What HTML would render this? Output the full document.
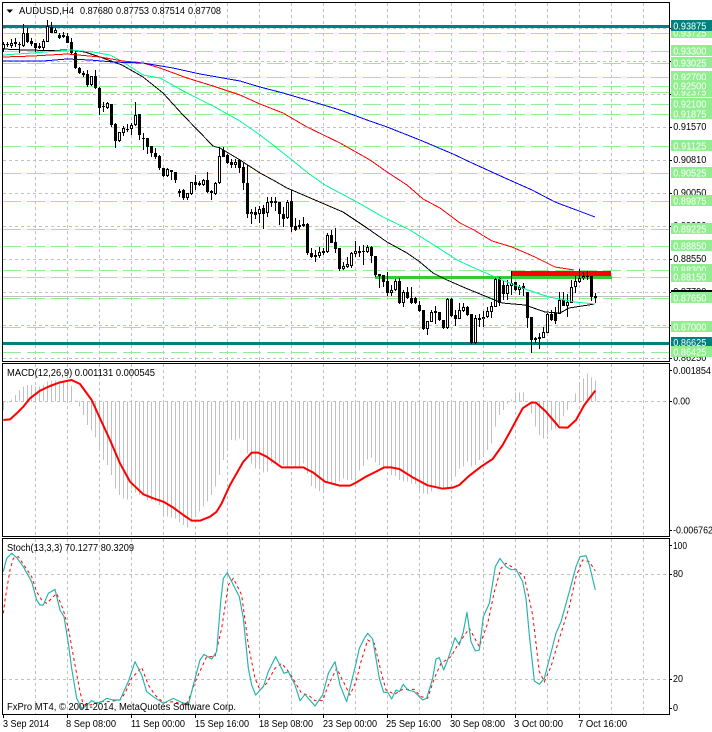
<!DOCTYPE html>
<html><head><meta charset="utf-8"><title>AUDUSD,H4</title>
<style>
html,body{margin:0;padding:0;background:#fff;width:712px;height:732px;overflow:hidden}
svg{display:block;font-family:"Liberation Sans",sans-serif;font-size:10px}
.c{shape-rendering:crispEdges;fill:none}
.w{fill:#fff}.k{fill:#000}
</style></head><body>
<svg width="712" height="732" viewBox="0 0 712 732">
<rect width="712" height="732" fill="#fff"/>
<!-- grid -->
<path class="c" stroke="#c0c0c0" stroke-dasharray="3 3" d="M35.5 3V361M67.5 3V361M99.5 3V361M131.5 3V361M163.5 3V361M195.5 3V361M227.5 3V361M259.5 3V361M291.5 3V361M323.5 3V361M355.5 3V361M387.5 3V361M419.5 3V361M451.5 3V361M483.5 3V361M515.5 3V361M547.5 3V361M579.5 3V361M611.5 3V361M643.5 3V361
M3 28.5H669M3 61.5H669M3 94.5H669M3 127.5H669M3 160.5H669M3 193.5H669M3 226.5H669M3 259.5H669M3 292.5H669M3 325.5H669M3 358.5H669
M35.5 364V536M67.5 364V536M99.5 364V536M131.5 364V536M163.5 364V536M195.5 364V536M227.5 364V536M259.5 364V536M291.5 364V536M323.5 364V536M355.5 364V536M387.5 364V536M419.5 364V536M451.5 364V536M483.5 364V536M515.5 364V536M547.5 364V536M579.5 364V536M611.5 364V536M643.5 364V536
M3 401.5H669
M35.5 539V714M67.5 539V714M99.5 539V714M131.5 539V714M163.5 539V714M195.5 539V714M227.5 539V714M259.5 539V714M291.5 539V714M323.5 539V714M355.5 539V714M387.5 539V714M419.5 539V714M451.5 539V714M483.5 539V714M515.5 539V714M547.5 539V714M579.5 539V714M611.5 539V714M643.5 539V714
M3 574.5H669M3 679.5H669"/>
<!-- green levels -->
<path class="c" stroke="#90ee90" stroke-dasharray="18 6" d="M3 33.5H669M3 51.5H669M3 63.5H669M3 77.5H669M3 86.5H669M3 92.5H669M3 104.5H669M3 114.5H669M3 146.5H669M3 173.5H669M3 201.5H669M3 229.5H669M3 246.5H669M3 270.5H669M3 277.5H669M3 298.5H669M3 327.5H669M3 352.5H669"/>
<path class="c" stroke="#c0c0c0" d="M3 296.5H669"/>
<rect class="c" x="3" y="25" width="666" height="3" style="fill:#008080"/>
<rect class="c" x="3" y="342" width="666" height="3" style="fill:#008080"/>
<rect class="c" x="375" y="276" width="237" height="3" style="fill:#32cd32"/>
<rect class="c" x="511" y="271" width="100" height="5" style="fill:#f00"/>
<!-- candle wicks -->
<path class="c" stroke="#000" d="M3.5 42V52M7.5 42V47M11.5 39V48M15.5 38V47M19.5 42V53M23.5 24V47M27.5 28V43M31.5 38V46M35.5 43V52M39.5 43V49M43.5 39V50M47.5 20V42M51.5 22V33M55.5 28V33M59.5 33V39M63.5 32V38M67.5 33V43M71.5 38V55M75.5 50V69M79.5 67V74M83.5 71V77M87.5 70V87M91.5 76V86M95.5 70V89M99.5 87V115M103.5 102V112M107.5 102V109M111.5 104V127M115.5 123V148M119.5 132V142M123.5 126V136M127.5 124V132M131.5 123V135M135.5 102V126M139.5 114V140M143.5 133V150M147.5 138V154M151.5 146V157M155.5 148V159M159.5 155V170M163.5 168V177M167.5 168V177M171.5 170V180M175.5 172V183M179.5 189V197M183.5 189V200M187.5 193V200M191.5 182V195M195.5 175V190M199.5 181V186M203.5 179V186M207.5 172V193M211.5 190V200M215.5 182V195M219.5 147V184M223.5 147V157M227.5 154V164M231.5 159V168M235.5 159V168M239.5 159V173
M243.5 163V190M247.5 165V218M251.5 209V224M255.5 207V219M259.5 206V223M263.5 205V229M267.5 197V217M271.5 197V207M275.5 197V211M279.5 202V225M283.5 207V227M287.5 200V219M291.5 190V232M295.5 218V231M299.5 220V229M303.5 217V227M307.5 223V255M311.5 248V258M315.5 250V262M319.5 247V258M323.5 248V255M327.5 233V253M331.5 230V243M335.5 228V253M339.5 248V271M343.5 262V270M347.5 257V268M351.5 252V268M355.5 241V257M359.5 246V257M363.5 245V265M367.5 245V253M371.5 246V263M375.5 256V277M379.5 274V288M383.5 275V287M387.5 272V296M391.5 285V296M395.5 279V291M399.5 278V304M403.5 290V307M407.5 287V299M411.5 287V304M415.5 297V304M419.5 301V312M423.5 310V330M427.5 321V335M431.5 310V322M435.5 306V324M439.5 312V321M443.5 320V329M447.5 298V329M451.5 298V317M455.5 310V326M459.5 303V319M463.5 303V312M467.5 306V316M471.5 314V344M475.5 315V344
M479.5 314V327M483.5 311V327M487.5 307V318M491.5 302V318M495.5 277V307M499.5 277V306M503.5 280V300M507.5 280V300M511.5 271V295M515.5 282V291M519.5 285V295M523.5 283V296M527.5 292V328M531.5 317V353M535.5 337V343M539.5 333V349M543.5 327V338M547.5 313V333M551.5 310V321M555.5 307V324M559.5 292V314M563.5 292V306M567.5 294V317M571.5 280V303M575.5 276V293M579.5 269V283M583.5 272V280M587.5 271V280M591.5 276V301M595.5 293V303"/>
<!-- candle bodies -->
<path class="c" stroke="#000" stroke-width="3" d="M3.5 44V49M7.5 44V45M11.5 43V46M15.5 42V44M19.5 44V45M23.5 33V46M27.5 33V42M31.5 41V44M35.5 43V48M39.5 46V48M43.5 41V48M47.5 26V42M51.5 27V33M55.5 30V33M59.5 35V38M63.5 35V37M67.5 36V43M71.5 42V53M75.5 53V68M79.5 68V73M83.5 73V75M87.5 74V85M91.5 76V85M95.5 76V88M99.5 88V108M103.5 106V107M107.5 103V108M111.5 104V125M115.5 124V141M119.5 132V141M123.5 128V133M127.5 129V130M131.5 125V129M135.5 115V125M139.5 114V135M143.5 138V139M147.5 138V147M151.5 146V153M155.5 153V157M159.5 156V168M163.5 168V176M167.5 169V176M171.5 170V172M175.5 172V180M179.5 191V193M183.5 190V198M187.5 193V198M191.5 182V194M195.5 182V185M199.5 183V185M203.5 180V185M207.5 180V192M211.5 191V193M215.5 183V194M219.5 156V183M223.5 150V157M227.5 155V163M231.5 162V165M235.5 162V165M239.5 160V168
M243.5 167V183M247.5 183V214M251.5 212V214M255.5 212V215M259.5 209V214M263.5 208V214M267.5 202V213M271.5 201V203M275.5 201V203M279.5 202V214M283.5 214V219M287.5 202V218M291.5 201V227M295.5 226V230M299.5 225V227M303.5 224V226M307.5 224V253M311.5 253V257M315.5 255V257M319.5 252V256M323.5 251V253M327.5 235V252M331.5 235V243M335.5 242V249M339.5 248V269M343.5 266V269M347.5 264V267M351.5 253V266M355.5 251V254M359.5 251V253M363.5 251V252M367.5 247V252M371.5 247V256M375.5 256V275M379.5 274V276M383.5 275V282M387.5 281V293M391.5 290V293M395.5 281V290M399.5 281V303M403.5 292V303M407.5 292V298M411.5 298V303M415.5 298V303M419.5 305V311M423.5 310V329M427.5 321V329M431.5 312V322M435.5 311V313M439.5 312V320M443.5 320V328M447.5 299V328M451.5 299V316M455.5 315V319M459.5 310V319M463.5 307V311M467.5 307V315M471.5 314V343M475.5 318V343
M479.5 318V320M483.5 317V319M487.5 311V317M491.5 306V312M495.5 279V307M499.5 278V303M503.5 285V294M507.5 285V294M511.5 283V286M515.5 282V290M519.5 287V290M523.5 286V289M527.5 292V318M531.5 317V340M535.5 338V340M539.5 337V339M543.5 332V338M547.5 314V333M551.5 314V320M555.5 313V321M559.5 300V314M563.5 300V306M567.5 302V306M571.5 287V303M575.5 281V287M579.5 278V282M583.5 276V278M587.5 276V277M591.5 276V297M595.5 296V298"/>
<path class="c" stroke="#fff" d="M3.5 45V48M11.5 44V45M23.5 34V45M43.5 42V47M47.5 27V41M55.5 31V32M91.5 77V84M107.5 104V107M119.5 133V140M123.5 129V132M131.5 126V128M135.5 116V124M167.5 170V175M187.5 194V197M191.5 183V193M203.5 181V184M215.5 184V193M219.5 157V182M235.5 163V164M251.5 213V213.5M259.5 210V213M267.5 203V212M287.5 203V217M319.5 253V255M327.5 236V251M343.5 267V268M347.5 265V266M351.5 254V265M355.5 252V253M367.5 248V251M391.5 291V292M395.5 282V289M403.5 293V302M427.5 322V328M431.5 313V321M447.5 300V327M459.5 311V318M463.5 308V310M475.5 319V342M483.5 318V318.5M487.5 312V316M491.5 307V311M495.5 280V306M507.5 286V293M511.5 284V285M519.5 288V289M543.5 333V337M547.5 315V332M559.5 301V313M567.5 303V305M571.5 288V302M575.5 282V286M579.5 279V281M583.5 277V277.5"/>
<!-- moving averages -->
<g class="c">
<path stroke="#000" stroke-width="1" d="M3 49L25 50L50 50.500L70 50L85 52L100 57L122 65L143 77L163 93L183 115L213 146L220 148L240 160L260 173L273 180L287 188L315 200L343 212L367 228L387 242L407 253L420 262L433 273L447 280L463 287L480 294L502 303L525 305L545 312L560 313L569 308L595 304"/>
<path stroke="#00fa9a" stroke-width="1" d="M3 55L33 53L70 50L93 52L110 55L123 62L143 75L160 78L187 93L213 106L240 121L260 135L273 145L292 160L308 173L325 185L340 193L357 202L383 217L410 230L437 247L457 260L472 267L502 280L525 289L549 297L575 302L595 304"/>
<path stroke="#f00" stroke-width="1" d="M3 57L33 56L67 54L100 57L123 61L143 63L160 68L187 78L213 86L240 95L260 104L283 113L307 127L340 143L370 160L387 172L407 185L423 199L440 208L460 223L474 230L492 241L512 247L535 257L555 267L574 270"/>
<path stroke="#00f" stroke-width="1" d="M3 61L43 61L67 59L90 60L113 62L143 63L173 68L200 74L240 81L260 87L283 93L307 100L340 110L367 120L387 127L420 140L453 154L472 163L505 178L532 190L555 202L595 217"/>
</g>
<!-- MACD -->
<g transform="translate(0 360) scale(.33333)">
<path class="c" stroke="#c0c0c0" stroke-width="3" d="M10.500 124V150M22.500 124V127M34.500 124V118M46.500 124V105M58.500 124V90M70.500 124V80M82.500 124V75M94.500 124V75M106.500 124V80M118.500 124V80M130.500 124V75M142.500 124V65M154.500 124V62M166.500 124V62M178.500 124V65M190.500 124V65M202.500 124V68M214.500 124V78M226.500 124V122M238.500 124V140M250.500 124V165M262.500 124V195M274.500 124V212M286.500 124V232M298.500 124V270M310.500 124V300M322.500 124V315M334.500 124V345M346.500 124V385M358.500 124V405M370.500 124V415M382.500 124V418M394.500 124V385M406.500 124V398M418.500 124V405M430.500 124V405M442.500 124V420M454.500 124V422M466.500 124V425M478.500 124V435M490.500 124V465M502.500 124V470M514.500 124V472M526.500 124V475M538.500 124V488M550.500 124V495M562.500 124V502M574.500 124V480M586.500 124V470M598.500 124V455M610.500 124V440M622.500 124V425M634.500 124V405M646.500 124V380M658.500 124V345M670.500 124V300M682.500 124V262M694.500 124V240M706.500 124V242M718.500 124V235M730.500 124V240M742.500 124V280M754.500 124V310M766.500 124V325M778.500 124V325M790.500 124V338M802.500 124V335M814.500 124V310M826.500 124V305M838.500 124V310M850.500 124V315M862.500 124V320M874.500 124V315M886.500 124V320M898.500 124V322M910.500 124V310M922.500 124V340M934.500 124V378M946.500 124V385M958.500 124V395M970.500 124V395M982.500 124V365M994.500 124V375M1006.500 124V375M1018.500 124V365M1030.500 124V355M1042.500 124V360M1054.500 124V360M1066.500 124V365
M1078.500 124V332M1090.500 124V318M1102.500 124V298M1114.500 124V294M1126.500 124V308M1138.500 124V315M1150.500 124V322M1162.500 124V322M1174.500 124V345M1186.500 124V348M1198.500 124V360M1210.500 124V365M1222.500 124V365M1234.500 124V370M1246.500 124V372M1258.500 124V390M1270.500 124V400M1282.500 124V402M1294.500 124V395M1306.500 124V380M1318.500 124V385M1330.500 124V385M1342.500 124V385M1354.500 124V360M1366.500 124V350M1378.500 124V325M1390.500 124V320M1402.500 124V305M1414.500 124V320M1426.500 124V315M1438.500 124V300M1450.500 124V290M1462.500 124V270M1474.500 124V250M1486.500 124V200M1498.500 124V165M1510.500 124V150M1522.500 124V130M1534.500 124V118M1546.500 124V97M1558.500 124V97M1570.500 124V97M1582.500 124V125M1594.500 124V160M1606.500 124V200M1618.500 124V225M1630.500 124V235M1642.500 124V225M1654.500 124V210M1666.500 124V205M1678.500 124V195M1690.500 124V170M1702.500 124V150M1714.500 124V127M1726.500 124V100M1738.500 124V75M1750.500 124V55M1762.500 124V40M1774.500 124V52M1786.500 124V62"/>
<path fill="none" stroke="#f00" stroke-width="6" stroke-linejoin="round" d="M10 180L30 178L50 160L70 140L90 115L120 92L150 78L180 67L215 60L240 72L275 120L300 175L330 240L360 310L390 365L430 403L460 415L490 425L520 443L550 465L575 482L600 482L630 470L650 455L665 430L690 375L730 305L755 278L775 278L800 290L845 322L910 322L940 338L975 365L1020 377L1050 377L1068 368L1098 350L1128 335L1153 322L1173 322L1198 327L1238 352L1283 376L1328 386L1358 383L1378 375L1408 347L1443 320L1478 297L1508 255L1533 210L1568 145L1593 128L1608 128L1638 155L1678 202L1703 203L1728 180L1753 135L1786 92"/>
</g>
<!-- Stochastic -->
<g transform="translate(0 535) scale(.33333)" fill="none">
<path stroke="#f00" stroke-width="3" stroke-dasharray="9 9" d="M10 235L15 195L30 105L40 70L55 65L75 95L95 125L110 170L125 195L140 205L160 185L170 175L190 225L205 280L225 390L240 470L250 510L270 510L300 500L325 500L360 495L375 475L395 430L425 397L445 450L465 480L490 503L520 500L560 510L590 430L620 365L645 365L665 280L685 150L700 130L725 180L745 330L765 430L780 465L800 445L825 400L845 385L870 415L890 450L905 475L925 480L945 497L968 497L985 450L1010 400L1030 440L1050 480L1068 440L1083 380L1103 315L1123 325L1143 410L1158 465L1183 478L1208 463L1243 463L1263 485L1283 490L1303 430L1323 385L1353 365L1373 330L1408 280L1438 335L1463 265L1483 170L1503 100L1518 85L1548 103L1573 125L1598 240L1618 410L1633 440L1653 395L1678 310L1708 215L1728 125L1748 75L1768 80L1786 108"/>
<path stroke="#20b2aa" stroke-width="3.400" stroke-linejoin="round" d="M10 110L20 70L35 55L50 68L70 95L95 140L110 195L120 210L130 210L145 175L165 163L180 225L192 245L205 325L215 400L230 490L245 520L255 515L275 497L290 505L305 500L320 490L340 495L360 495L385 440L405 380L425 420L440 470L460 485L490 505L520 490L545 502L565 510L580 450L600 375L612 358L635 372L650 350L662 200L670 130L682 113L700 150L718 185L730 250L745 400L755 450L767 480L790 455L805 410L827 365L852 415L865 410L885 450L900 497L915 478L945 513L968 480L985 415L1005 380L1020 450L1040 500L1068 385L1078 340L1093 310L1103 295L1118 312L1138 430L1151 472L1163 472L1175 492L1188 465L1198 470L1210 448L1223 465L1243 470L1268 495L1280 490L1298 430L1308 372L1318 368L1331 405L1343 375L1365 308L1378 330L1390 290L1401 232L1413 320L1426 348L1438 345L1450 245L1468 205L1486 95L1500 70L1518 95L1533 104L1548 103L1568 140L1578 190L1588 300L1603 438L1618 448L1633 430L1668 295L1683 260L1708 170L1728 95L1740 65L1758 62L1768 90L1786 165"/>
</g>
<!-- frames -->
<path class="c" stroke="#000" d="M2.500 2V361.500M2 2.500H670M669.500 2V361.500M2 361.500H670M2.500 363V536.500M2 363.500H670M669.500 363V536.500M2 536.500H670M2.500 538V714.500M2 538.500H670M669.500 538V714.500M2 714.500H670
M670 28.500H672M670 61.500H672M670 94.500H672M670 127.500H672M670 160.500H672M670 193.500H672M670 226.500H672M670 259.500H672M670 292.500H672M670 325.500H672M670 358.500H672M670 370.500H672M670 401.500H672M670 530.500H672M670 545.500H672M670 574.500H672M670 679.500H672M670 708.500H672
M3.500 714V718M67.500 714V718M131.500 714V718M195.500 714V718M259.500 714V718M323.500 714V718M387.500 714V718M451.500 714V718M515.500 714V718M579.500 714V718"/>
<!-- header -->
<path d="M6.500 9.500H13L9.750 13Z" fill="#000"/>
<g class="k">
<text x="19" y="14" textLength="55" lengthAdjust="spacingAndGlyphs">AUDUSD,H4</text>
<text x="80" y="14" textLength="33" lengthAdjust="spacingAndGlyphs">0.87680</text>
<text x="116" y="14" textLength="33" lengthAdjust="spacingAndGlyphs">0.87753</text>
<text x="152" y="14" textLength="33" lengthAdjust="spacingAndGlyphs">0.87514</text>
<text x="188" y="14" textLength="33" lengthAdjust="spacingAndGlyphs">0.87708</text>
<text x="7" y="376" textLength="148" lengthAdjust="spacingAndGlyphs">MACD(12,26,9) 0.001131 0.000545</text>
<text x="7" y="551" textLength="127" lengthAdjust="spacingAndGlyphs">Stoch(13,3,3) 70.1277 80.3209</text>
<text x="7" y="710" textLength="229" lengthAdjust="spacingAndGlyphs">FxPro MT4, © 2001-2014, MetaQuotes Software Corp.</text>
<text x="3" y="727" textLength="46" lengthAdjust="spacingAndGlyphs">3 Sep 2014</text>
<text x="66" y="727" textLength="50" lengthAdjust="spacingAndGlyphs">8 Sep 08:00</text>
<text x="131" y="727" textLength="54" lengthAdjust="spacingAndGlyphs">11 Sep 00:00</text>
<text x="195" y="727" textLength="54" lengthAdjust="spacingAndGlyphs">15 Sep 16:00</text>
<text x="259" y="727" textLength="54" lengthAdjust="spacingAndGlyphs">18 Sep 08:00</text>
<text x="323" y="727" textLength="54" lengthAdjust="spacingAndGlyphs">23 Sep 00:00</text>
<text x="386" y="727" textLength="55" lengthAdjust="spacingAndGlyphs">25 Sep 16:00</text>
<text x="450" y="727" textLength="55" lengthAdjust="spacingAndGlyphs">30 Sep 08:00</text>
<text x="514" y="727" textLength="49" lengthAdjust="spacingAndGlyphs">3 Oct 00:00</text>
<text x="578" y="727" textLength="49" lengthAdjust="spacingAndGlyphs">7 Oct 16:00</text>
<text x="673" y="374" textLength="38" lengthAdjust="spacingAndGlyphs">0.001854</text>
<text x="673" y="404.500" textLength="17" lengthAdjust="spacingAndGlyphs">0.00</text>
<text x="673" y="533.500" textLength="40" lengthAdjust="spacingAndGlyphs">-0.006762</text>
<text x="673" y="549" textLength="14" lengthAdjust="spacingAndGlyphs">100</text>
<text x="673" y="577" textLength="10" lengthAdjust="spacingAndGlyphs">80</text>
<text x="673" y="682" textLength="10" lengthAdjust="spacingAndGlyphs">20</text>
<text x="673" y="711" textLength="5" lengthAdjust="spacingAndGlyphs">0</text>
<text x="673.300" y="130" textLength="33" lengthAdjust="spacingAndGlyphs">0.91570</text>
<text x="673.300" y="163" textLength="33" lengthAdjust="spacingAndGlyphs">0.90810</text>
<text x="673.300" y="196" textLength="33" lengthAdjust="spacingAndGlyphs">0.90050</text>
<text x="673.300" y="229" textLength="33" lengthAdjust="spacingAndGlyphs">0.89290</text>
<text x="673.300" y="262" textLength="33" lengthAdjust="spacingAndGlyphs">0.88550</text>
<text x="673.300" y="295" textLength="33" lengthAdjust="spacingAndGlyphs">0.87790</text>
<text x="673.300" y="361" textLength="33" lengthAdjust="spacingAndGlyphs">0.86250</text>
</g>
<!-- price labels -->
<g font-size="10">
<rect x="671" y="290" width="41" height="11" fill="#000"/>
<rect x="671" y="27" width="41" height="11" fill="#90ee90"/><text class="w" x="673.300" y="36.500" textLength="33" lengthAdjust="spacingAndGlyphs">0.93725</text>
<rect x="671" y="20" width="41" height="11" fill="#008080"/><text class="w" x="673.300" y="29.500" textLength="33" lengthAdjust="spacingAndGlyphs">0.93875</text>
<rect x="671" y="45" width="41" height="11" fill="#90ee90"/><text class="w" x="673.300" y="54.500" textLength="33" lengthAdjust="spacingAndGlyphs">0.93300</text>
<rect x="671" y="57" width="41" height="11" fill="#90ee90"/><text class="w" x="673.300" y="66.500" textLength="33" lengthAdjust="spacingAndGlyphs">0.93025</text>
<rect x="671" y="71" width="41" height="11" fill="#90ee90"/><text class="w" x="673.300" y="80.500" textLength="33" lengthAdjust="spacingAndGlyphs">0.92700</text>
<rect x="671" y="86" width="41" height="11" fill="#90ee90"/><text class="w" x="673.300" y="95.500" textLength="33" lengthAdjust="spacingAndGlyphs">0.92375</text>
<rect x="671" y="80" width="41" height="11" fill="#90ee90"/><text class="w" x="673.300" y="89.500" textLength="33" lengthAdjust="spacingAndGlyphs">0.92500</text>
<rect x="671" y="98" width="41" height="11" fill="#90ee90"/><text class="w" x="673.300" y="107.500" textLength="33" lengthAdjust="spacingAndGlyphs">0.92100</text>
<rect x="671" y="108" width="41" height="11" fill="#90ee90"/><text class="w" x="673.300" y="117.500" textLength="33" lengthAdjust="spacingAndGlyphs">0.91875</text>
<rect x="671" y="140" width="41" height="11" fill="#90ee90"/><text class="w" x="673.300" y="149.500" textLength="33" lengthAdjust="spacingAndGlyphs">0.91125</text>
<rect x="671" y="167" width="41" height="11" fill="#90ee90"/><text class="w" x="673.300" y="176.500" textLength="33" lengthAdjust="spacingAndGlyphs">0.90525</text>
<rect x="671" y="195" width="41" height="11" fill="#90ee90"/><text class="w" x="673.300" y="204.500" textLength="33" lengthAdjust="spacingAndGlyphs">0.89875</text>
<rect x="671" y="223" width="41" height="11" fill="#90ee90"/><text class="w" x="673.300" y="232.500" textLength="33" lengthAdjust="spacingAndGlyphs">0.89225</text>
<rect x="671" y="240" width="41" height="11" fill="#90ee90"/><text class="w" x="673.300" y="249.500" textLength="33" lengthAdjust="spacingAndGlyphs">0.88850</text>
<rect x="671" y="264" width="41" height="11" fill="#90ee90"/><text class="w" x="673.300" y="273.500" textLength="33" lengthAdjust="spacingAndGlyphs">0.88300</text>
<rect x="671" y="271" width="41" height="11" fill="#90ee90"/><text class="w" x="673.300" y="280.500" textLength="33" lengthAdjust="spacingAndGlyphs">0.88150</text>
<rect x="671" y="292" width="41" height="11" fill="#90ee90"/><text class="w" x="673.300" y="301.500" textLength="33" lengthAdjust="spacingAndGlyphs">0.87650</text>
<rect x="671" y="321" width="41" height="11" fill="#90ee90"/><text class="w" x="673.300" y="330.500" textLength="33" lengthAdjust="spacingAndGlyphs">0.87000</text>
<rect x="671" y="346" width="41" height="11" fill="#90ee90"/><text class="w" x="673.300" y="355.500" textLength="33" lengthAdjust="spacingAndGlyphs">0.86425</text>
<rect x="671" y="337" width="41" height="9" fill="#008080"/><text class="w" x="673.300" y="346" textLength="33" lengthAdjust="spacingAndGlyphs">0.86625</text>
</g>
</svg>
</body></html>
